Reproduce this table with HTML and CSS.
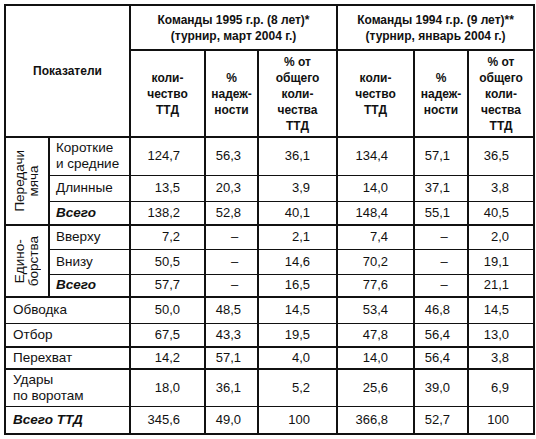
FILE: index.html
```html
<!DOCTYPE html>
<html lang="ru">
<head>
<meta charset="utf-8">
<link rel="stylesheet" href="styles.css">
</head>
<body>
<table class="tbl">
  <colgroup>
    <col class="c-rot"><col class="c-sub"><col class="c1"><col class="c2"><col class="c3"><col class="c4"><col class="c5"><col class="c6">
  </colgroup>
  <thead>
    <tr class="h1">
      <th colspan="2" rowspan="2" class="hd">Показатели</th>
      <th colspan="3" class="hd">Команды 1995 г.р. (8 лет)*<br>(турнир, март 2004 г.)</th>
      <th colspan="3" class="hd">Команды 1994 г.р. (9 лет)**<br>(турнир, январь 2004 г.)</th>
    </tr>
    <tr class="h2">
      <th class="hd">коли-<br>чество<br>ТТД</th>
      <th class="hd">%<br>надеж-<br>ности</th>
      <th class="hd">% от<br>общего<br>коли-<br>чества<br>ТТД</th>
      <th class="hd">коли-<br>чество<br>ТТД</th>
      <th class="hd">%<br>надеж-<br>ности</th>
      <th class="hd">% от<br>общего<br>коли-<br>чества<br>ТТД</th>
    </tr>
  </thead>
  <tbody>
    <tr class="r38">
      <td rowspan="3" class="rot thick-b"><div class="vt">Передачи<br>мяча</div></td>
      <td class="lbl">Короткие<br>и средние</td>
      <td class="n n1">124,7</td><td class="n n2">56,3</td><td class="n n3">36,1</td>
      <td class="n n4">134,4</td><td class="n n5">57,1</td><td class="n n6">36,5</td>
    </tr>
    <tr class="r26">
      <td class="lbl">Длинные</td>
      <td class="n n1">13,5</td><td class="n n2">20,3</td><td class="n n3">3,9</td>
      <td class="n n4">14,0</td><td class="n n5">37,1</td><td class="n n6">3,8</td>
    </tr>
    <tr class="r24 thick-b">
      <td class="lbl bi">Всего</td>
      <td class="n n1">138,2</td><td class="n n2">52,8</td><td class="n n3">40,1</td>
      <td class="n n4">148,4</td><td class="n n5">55,1</td><td class="n n6">40,5</td>
    </tr>
    <tr class="r24">
      <td rowspan="3" class="rot thick-b"><div class="vt">Едино-<br>борства</div></td>
      <td class="lbl">Вверху</td>
      <td class="n n1">7,2</td><td class="dash">–</td><td class="n n3">2,1</td>
      <td class="n n4">7,4</td><td class="dash">–</td><td class="n n6">2,0</td>
    </tr>
    <tr class="r25">
      <td class="lbl">Внизу</td>
      <td class="n n1">50,5</td><td class="dash">–</td><td class="n n3">14,6</td>
      <td class="n n4">70,2</td><td class="dash">–</td><td class="n n6">19,1</td>
    </tr>
    <tr class="r23 thick-b">
      <td class="lbl bi">Всего</td>
      <td class="n n1">57,7</td><td class="dash">–</td><td class="n n3">16,5</td>
      <td class="n n4">77,6</td><td class="dash">–</td><td class="n n6">21,1</td>
    </tr>
    <tr class="r26">
      <td colspan="2" class="lbl wide">Обводка</td>
      <td class="n n1">50,0</td><td class="n n2">48,5</td><td class="n n3">14,5</td>
      <td class="n n4">53,4</td><td class="n n5">46,8</td><td class="n n6">14,5</td>
    </tr>
    <tr class="r24 thick-b">
      <td colspan="2" class="lbl wide">Отбор</td>
      <td class="n n1">67,5</td><td class="n n2">43,3</td><td class="n n3">19,5</td>
      <td class="n n4">47,8</td><td class="n n5">56,4</td><td class="n n6">13,0</td>
    </tr>
    <tr class="r22 thick-b">
      <td colspan="2" class="lbl wide">Перехват</td>
      <td class="n n1">14,2</td><td class="n n2">57,1</td><td class="n n3">4,0</td>
      <td class="n n4">14,0</td><td class="n n5">56,4</td><td class="n n6">3,8</td>
    </tr>
    <tr class="r37">
      <td colspan="2" class="lbl wide">Удары<br>по воротам</td>
      <td class="n n1">18,0</td><td class="n n2">36,1</td><td class="n n3">5,2</td>
      <td class="n n4">25,6</td><td class="n n5">39,0</td><td class="n n6">6,9</td>
    </tr>
    <tr class="r28">
      <td colspan="2" class="lbl wide bi">Всего ТТД</td>
      <td class="n n1">345,6</td><td class="n n2">49,0</td><td class="n n3">100</td>
      <td class="n n4">366,8</td><td class="n n5">52,7</td><td class="n n6">100</td>
    </tr>
  </tbody>
</table>
</body>
</html>
```

FILE: styles.css
```css
html, body {
  margin: 0;
  padding: 0;
  background: #fff;
}

body {
  padding: 4px 0 0 4px;
  font-family: "Liberation Sans", Arial, sans-serif;
  color: #111;
}

.tbl {
  border-collapse: collapse;
  table-layout: fixed;
  width: 529px;
  border: 2px solid #111;
}

.c-rot { width: 44px; }
.c-sub { width: 81px; }
.c1 { width: 75px; }
.c2 { width: 53px; }
.c3 { width: 79px; }
.c4 { width: 77px; }
.c5 { width: 54px; }
.c6 { width: 66px; }

.tbl th, .tbl td {
  border-left: 2px solid #111;
  border-right: 2px solid #111;
  border-top: 1px solid #111;
  border-bottom: 1px solid #111;
  padding: 0;
  overflow: hidden;
}

.hd {
  font-size: 12px;
  font-weight: bold;
  line-height: 16px;
  text-align: center;
  vertical-align: middle;
}

.h1 { height: 45px; }
.h1 th { border-bottom: 2px solid #111; }
.h2 { height: 87px; }
.h2 th { border-bottom: 2px solid #111; }

.r38 { height: 38px; }
.r37 { height: 37px; }
.r28 { height: 28px; }
.r26 { height: 26px; }
.r25 { height: 25px; }
.r24 { height: 24px; }
.r23 { height: 23px; }
.r22 { height: 22px; }

.tbl tr.thick-b td, .tbl td.thick-b {
  border-bottom: 2px solid #111;
}

.tbl td {
  font-size: 13px;
  line-height: 16px;
  vertical-align: middle;
}

.lbl {
  text-align: left;
  font-size: 13.5px !important;
  padding-left: 6px !important;
}

.wide {
  padding-left: 7px !important;
}

.bi {
  font-weight: bold;
  font-style: italic;
}

.n { text-align: right; }
.n1 { padding-right: 24px !important; }
.n2 { padding-right: 16px !important; }
.n3 { padding-right: 26px !important; }
.n4 { padding-right: 25px !important; }
.n5 { padding-right: 17px !important; }
.n6 { padding-right: 24px !important; }

.dash { text-align: center; padding-left: 6px !important; }

.rot {
  text-align: center;
}

.vt {
  writing-mode: vertical-rl;
  transform: rotate(180deg);
  margin: 0 auto;
  font-size: 13.5px;
  line-height: 14px;
  text-align: center;
}
```
